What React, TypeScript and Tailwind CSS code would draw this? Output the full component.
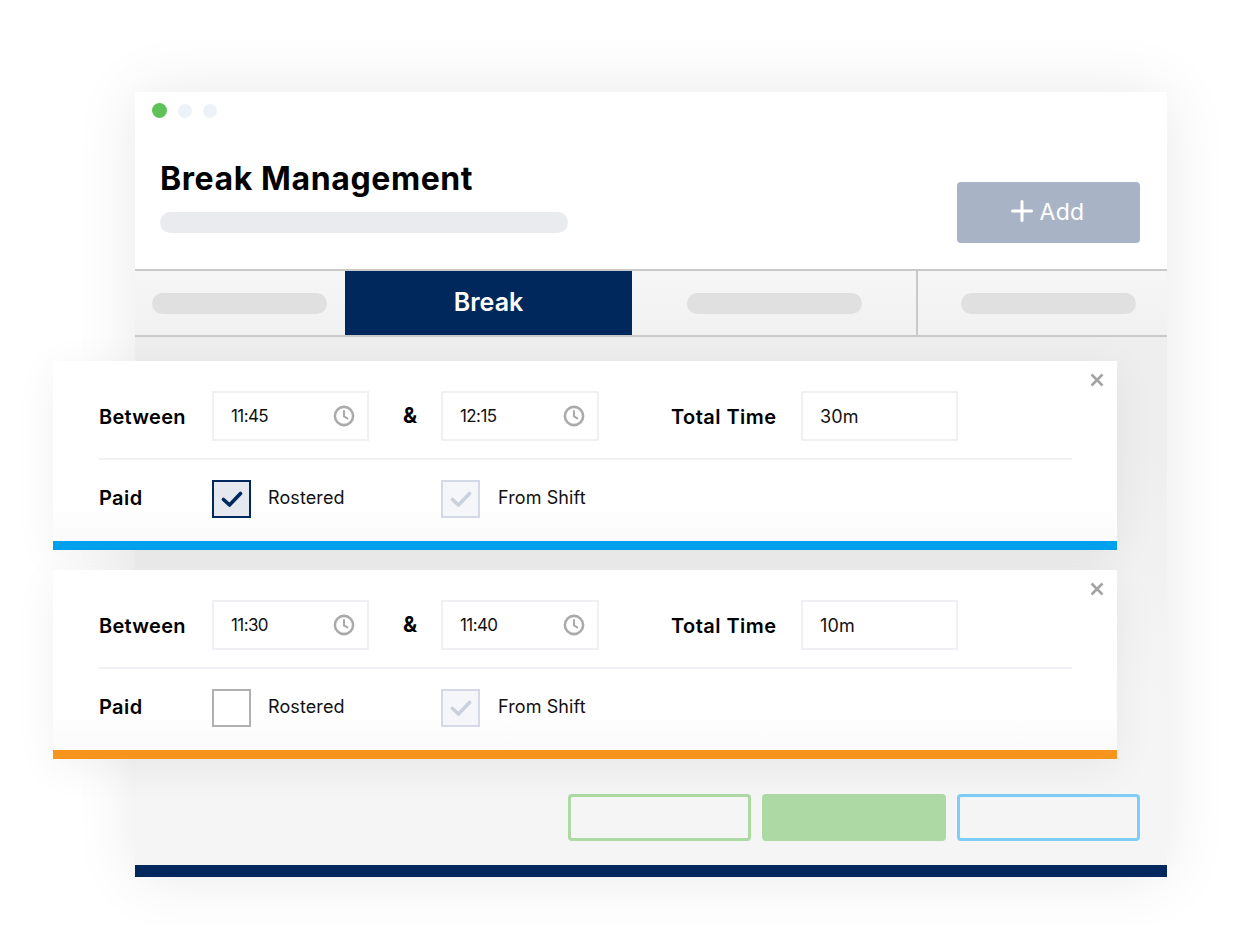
const FONT = "font-['Inter','Liberation_Sans',sans-serif]";

function Clock() {
  return (
    <svg viewBox="0 0 20 20" className="w-[22px] h-[22px]" fill="none" stroke="#aaaaaa">
      <circle cx="10" cy="10" r="8.3" strokeWidth="2.3" />
      <path d="M10 5.6V10.4L13 12.2" strokeWidth="1.9" strokeLinecap="round" strokeLinejoin="round" />
    </svg>
  );
}

function Check({ color }: { color: string }) {
  return (
    <svg viewBox="0 0 22 18" className="w-[22px] h-[18px]" fill="none">
      <path d="M2.5 9.5L8.5 15L19.5 3.5" stroke={color} strokeWidth="3.6" strokeLinecap="round" strokeLinejoin="round" />
    </svg>
  );
}

function Skeleton() {
  return <div className="w-[175px] h-[21px] rounded-full bg-[#e0e0e0]" />;
}

function TimeInput({ value, wide }: { value: string; wide?: boolean }) {
  return (
    <div className={`${wide ? "w-[158px]" : "w-[157px]"} h-[50px] border-2 border-[#eff0f3] bg-white flex items-center justify-between pl-[17px] pr-[12px] text-[17px] tracking-[-0.6px] text-[#111]`}>
      <span className="pt-px">{value}</span>
      <Clock />
    </div>
  );
}

function Box({ state }: { state: "on" | "off" | "locked" }) {
  if (state === "on") {
    return (
      <div className="w-[39px] h-[38px] border-2 border-[#00285c] bg-[#e5e8ee] flex items-center justify-center">
        <Check color="#00285c" />
      </div>
    );
  }
  if (state === "locked") {
    return (
      <div className="w-[39px] h-[38px] border-2 border-[#d3dae5] bg-[#f4f6f9] flex items-center justify-center">
        <Check color="#c9d1dc" />
      </div>
    );
  }
  return <div className="w-[39px] h-[38px] border-2 border-[#b0b0b0] bg-white" />;
}

function BreakCard(props: { from: string; to: string; total: string; rostered: boolean; bar: string }) {
  return (
    <div className="relative w-[1064px] h-[189px] bg-gradient-to-b from-white from-75% to-[#f9f9f9] flex flex-col shadow-[0_8px_40px_rgba(0,0,0,0.06)]">
      <svg viewBox="0 0 14 14" className="absolute right-[13px] top-[12px] w-[14px] h-[14px]" fill="none">
        <path d="M1.5 1.5L12.5 12.5M12.5 1.5L1.5 12.5" stroke="#a3a3a3" strokeWidth="2.6" />
      </svg>
      <div className="flex-1 pl-[46px] pr-[45px] pt-[30px]">
        <div className="flex items-center h-[50px]">
          <div className="w-[113px] pt-px text-[20px] font-semibold tracking-[0.3px] text-black">Between</div>
          <TimeInput value={props.from} />
          <div className="w-[72px] pl-[10px] text-center text-[21px] font-bold text-black">&amp;</div>
          <TimeInput value={props.to} wide />
          <div className="w-[130px] ml-[72px] pt-px text-[20px] font-semibold tracking-[0.45px] text-black">Total Time</div>
          <div className="w-[157px] h-[50px] border-2 border-[#eff0f3] bg-white flex items-center pl-[17px] pt-px text-[18px] tracking-[0.2px] text-[#111]">
            {props.total}
          </div>
        </div>
        <div className="h-[2px] mt-[17px] bg-[#eff1f4]" />
        <div className="flex items-center mt-[20px] h-[38px] text-[18px] text-[#111]">
          <div className="w-[113px] pb-[2px] text-[20px] font-semibold tracking-[0.4px] text-black">Paid</div>
          <Box state={props.rostered ? "on" : "off"} />
          <div className="w-[190px] pl-[17px] pb-[3px] tracking-[0.1px]">Rostered</div>
          <Box state="locked" />
          <div className="pl-[18px] pb-[3px] tracking-[0.1px]">From Shift</div>
        </div>
      </div>
      <div className={`h-[9px] ${props.bar}`} />
    </div>
  );
}

export default function App() {
  return (
    <div className={`w-[1254px] h-[925px] overflow-hidden bg-white pt-[92px] pl-[135px] ${FONT}`}>
      <div className="w-[1032px] h-[785px] flex flex-col bg-white shadow-[0_0_60px_rgba(0,0,0,0.09)]">
        <div className="flex gap-[11px] pl-[17px] pt-[11px]">
          <div className="w-[15px] h-[15px] rounded-full bg-[#5fc15a]" />
          <div className="w-[14px] h-[14px] mt-px rounded-full bg-[#edf2f9]" />
          <div className="w-[14px] h-[14px] mt-px rounded-full bg-[#edf2f9]" />
        </div>
        <div className="flex justify-between h-[151px] pl-[25px] pr-[27px]">
          <div>
            <h1 className="mt-[40px] text-[32px] leading-[42px] font-bold tracking-[0.6px] text-black">Break Management</h1>
            <div className="w-[408px] h-[21px] mt-[12px] rounded-full bg-[#e9ebef]" />
          </div>
          <div className="w-[183px] h-[61px] mt-[64px] pr-[2px] rounded-[4px] bg-[#a8b4c5] flex items-center justify-center gap-[7px] text-[23px] text-white">
            <svg viewBox="0 0 22 22" className="w-[22px] h-[22px] -mt-[3px]" fill="none">
              <path d="M11 1.5V20.5M1.5 11H20.5" stroke="white" strokeWidth="3" strokeLinecap="round" />
            </svg>
            <span className="tracking-[0.3px]">Add</span>
          </div>
        </div>
        <div className="flex h-[68px] border-y-2 border-[#c9c9c9] bg-gradient-to-b from-[#f6f6f6] to-[#f1f1f1]">
          <div className="w-[210px] flex items-center pl-[17px]">
            <Skeleton />
          </div>
          <div className="w-[287px] bg-[#00285c] flex items-center justify-center text-[25px] font-semibold text-white">Break</div>
          <div className="w-[286px] flex items-center justify-center border-r-2 border-[#c9c9c9]">
            <Skeleton />
          </div>
          <div className="flex-1 flex items-center pl-[43px]">
            <Skeleton />
          </div>
        </div>
        <div className="flex-1 flex flex-col bg-gradient-to-b from-[#eeeeee] from-20% to-[#f5f5f5] to-70%">
          <div className="-ml-[82px] pt-[24px] flex flex-col gap-[20px]">
            <BreakCard from="11:45" to="12:15" total="30m" rostered bar="bg-[#00a0ec]" />
            <BreakCard from="11:30" to="11:40" total="10m" rostered={false} bar="bg-[#f7941d]" />
          </div>
          <div className="flex justify-end gap-[11px] pr-[27px] mt-[35px]">
            <div className="w-[183px] h-[47px] rounded-[4px] border-[3px] border-[#acd9a4]" />
            <div className="w-[184px] h-[47px] rounded-[4px] bg-[#acd9a4]" />
            <div className="w-[183px] h-[47px] rounded-[4px] border-[3px] border-[#7dcdf6]" />
          </div>
        </div>
        <div className="h-[12px] bg-[#00285c]" />
      </div>
    </div>
  );
}
